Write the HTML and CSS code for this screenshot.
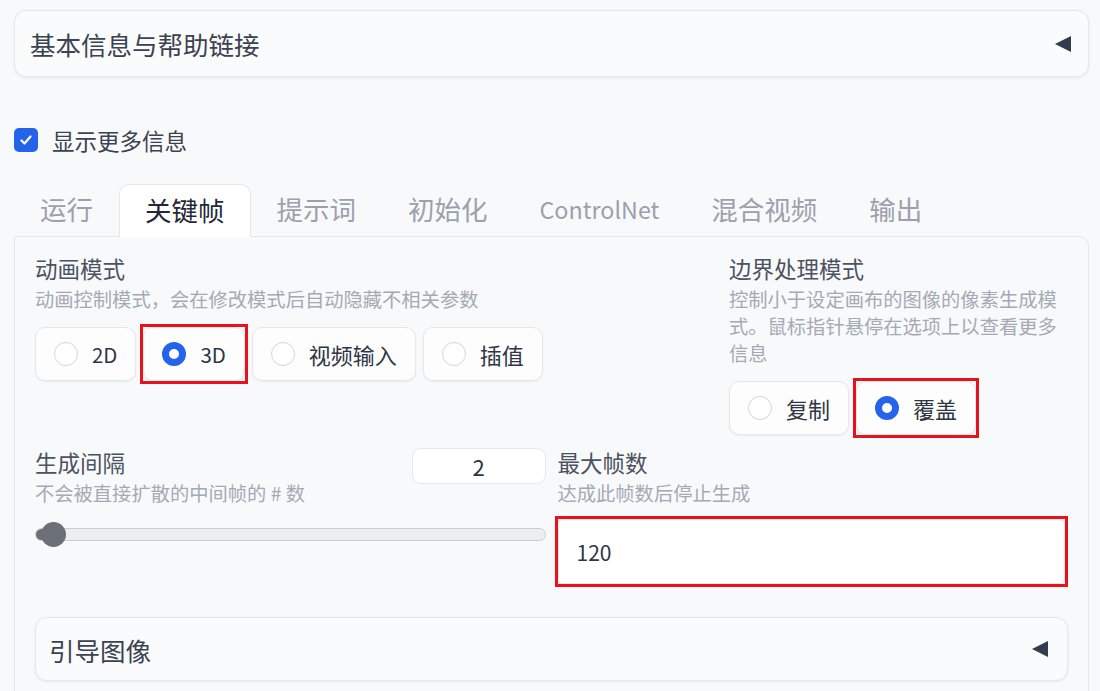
FILE: index.html
```html
<html lang="zh">
  <head>
    <meta charset="utf-8" />
    <title>Deforum</title>
    <link rel="stylesheet" href="styles.css">
  </head>
  <body>
    <div class="page">
      <div class="accordion top">
        <span>基本信息与帮助链接</span>
        <svg class="caret" viewBox="0 0 16 16"><polygon points="16,0 16,16 0,8" /></svg>
      </div>

      <label class="check">
        <span class="check-box">
          <svg viewBox="0 0 16 16"><path d="M3.5 8.5 L6.5 11.5 L12.5 4.5" /></svg>
        </span>
        显示更多信息
      </label>

      <div class="tabs">
        <div class="tab-nav">
          <div class="tab">运行</div>
          <div class="tab active">关键帧</div>
          <div class="tab">提示词</div>
          <div class="tab">初始化</div>
          <div class="tab"><span class="en">ControlNet</span></div>
          <div class="tab">混合视频</div>
          <div class="tab">输出</div>
        </div>

        <div class="tab-panel">
          <div class="row row-modes">
            <div class="block block-wide">
              <div class="label">动画模式</div>
              <div class="info">动画控制模式，会在修改模式后自动隐藏不相关参数</div>
              <div class="radios">
                <div class="radio"><span class="dot"></span><span class="en">2D</span></div>
                <div class="mark">
                  <div class="radio checked"><span class="dot"></span><span class="en">3D</span></div>
                </div>
                <div class="radio"><span class="dot"></span>视频输入</div>
                <div class="radio"><span class="dot"></span>插值</div>
              </div>
            </div>
            <div class="block block-side">
              <div class="label">边界处理模式</div>
              <div class="info">控制小于设定画布的图像的像素生成模式。鼠标指针悬停在选项上以查看更多信息</div>
              <div class="radios">
                <div class="radio"><span class="dot"></span>复制</div>
                <div class="mark">
                  <div class="radio checked"><span class="dot"></span>覆盖</div>
                </div>
              </div>
            </div>
          </div>

          <div class="row row-frames">
            <div class="block">
              <div class="head">
                <div>
                  <div class="label">生成间隔</div>
                  <div class="info">不会被直接扩散的中间帧的 # 数</div>
                </div>
                <div class="num">2</div>
              </div>
              <div class="slider">
                <div class="slider-fill"></div>
                <div class="slider-thumb"></div>
              </div>
            </div>
            <div class="block">
              <div class="label">最大帧数</div>
              <div class="info">达成此帧数后停止生成</div>
              <div class="mark field-mark">
                <div class="field">120</div>
              </div>
            </div>
          </div>

          <div class="accordion inner">
            <span>引导图像</span>
            <svg class="caret" viewBox="0 0 16 16"><polygon points="16,0 16,16 0,8" /></svg>
          </div>
        </div>
      </div>
    </div>
  </body>
</html>
```

FILE: styles.css
```css
* {
  box-sizing: border-box;
}

body {
  margin: 0;
  background: #f8f9fb;
  font-family: "Noto Sans CJK SC", "Noto Sans", sans-serif;
  color: #3b4250;
  overflow: hidden;
}

.page {
  padding: 10px 11px 0 14px;
}

.en {
  font-size: 0.93em;
}

.accordion {
  display: flex;
  align-items: center;
  justify-content: space-between;
  border: 1px solid #e4e7eb;
  border-radius: 12px;
  background: #fafbfc;
  box-shadow: 0 1px 3px rgba(0, 0, 0, 0.06);
  font-size: 25.5px;
  color: #3b4250;
}

.accordion.top {
  height: 67px;
  padding: 0 17px 0 15px;
}

.accordion.inner {
  height: 64px;
  margin-top: 33px;
  padding: 0 19px 0 13px;
}

.caret {
  width: 16px;
  height: 16px;
}

.caret polygon {
  fill: #333c4e;
}

.check {
  display: flex;
  align-items: center;
  gap: 14px;
  height: 25px;
  margin-top: 50px;
  font-size: 22.5px;
}

.check-box {
  display: flex;
  align-items: center;
  justify-content: center;
  width: 24px;
  height: 24px;
  border-radius: 5px;
  background: #2563eb;
}

.check-box svg {
  width: 16px;
  height: 16px;
}

.check-box path {
  fill: none;
  stroke: #fff;
  stroke-width: 2.2;
  stroke-linecap: round;
  stroke-linejoin: round;
}

.tabs {
  margin-top: 32px;
}

.tab-nav {
  display: flex;
  height: 52px;
}

.tab {
  display: flex;
  align-items: center;
  padding: 0 25px 4px;
  border: 1px solid transparent;
  border-bottom: none;
  border-radius: 10px 10px 0 0;
  font-size: 26.5px;
  color: #9ba1ab;
}

.tab .en {
  font-size: 0.88em;
}

.tab.active {
  position: relative;
  z-index: 1;
  height: 53px;
  background: #fff;
  border-color: #e4e7eb;
  color: #1f2937;
}

.tab-panel {
  border: 1px solid #e4e7eb;
  border-radius: 0 10px 0 0;
  padding: 16px 20px 30px 20px;
}

.row {
  display: flex;
}

.row-modes {
  gap: 18px;
}

.row-frames {
  gap: 12px;
  margin-top: 12px;
}

.block {
  flex: 1;
  min-width: 0;
}

.block-side {
  flex: 0 0 339px;
}

.label {
  font-size: 22.5px;
  line-height: 31px;
  color: #4b5260;
}

.info {
  margin-top: 2px;
  font-size: 19.3px;
  line-height: 27px;
  color: #a4aab3;
}

.radios {
  display: flex;
  gap: 7px;
  margin-top: 14px;
}

.radio {
  display: flex;
  align-items: center;
  gap: 14px;
  height: 54px;
  padding: 0 18px 0 18px;
  background: #fdfdfe;
  border: 1px solid #e5e7eb;
  border-radius: 10px;
  box-shadow: 0 1px 2px rgba(0, 0, 0, 0.06);
  font-size: 22px;
  color: #2f3542;
}

.dot {
  width: 24px;
  height: 24px;
  border-radius: 50%;
  border: 1px solid #d1d5db;
  background: #fff;
}

.radio.checked .dot {
  border: 7.5px solid #2563eb;
}

.mark {
  outline: 3px solid #e8121b;
  outline-offset: 0;
}

.field-mark {
  margin-top: 12px;
  margin-right: 3px;
}

.head {
  display: flex;
  justify-content: space-between;
  align-items: flex-start;
}

.num {
  width: 134px;
  height: 36px;
  margin-top: 1px;
  display: flex;
  align-items: center;
  justify-content: center;
  background: #fff;
  border: 1px solid #e5e7eb;
  border-radius: 9px;
  font-size: 22px;
  color: #2f3542;
}

.slider {
  position: relative;
  height: 13px;
  margin-top: 21px;
  background: #eceef1;
  border: 1px solid #c9ccd1;
  border-radius: 7px;
}

.slider-fill {
  width: 18px;
  height: 100%;
  background: #6b6f76;
  border-radius: 7px 0 0 7px;
}

.slider-thumb {
  position: absolute;
  left: 5px;
  top: -7px;
  width: 25px;
  height: 25px;
  border-radius: 50%;
  background: #6b6f76;
}

.field {
  display: flex;
  align-items: center;
  height: 65px;
  padding-left: 18px;
  background: #fff;
  border: 1px solid #e5e7eb;
  border-radius: 4px;
  font-size: 21px;
  color: #2f3542;
}
```
